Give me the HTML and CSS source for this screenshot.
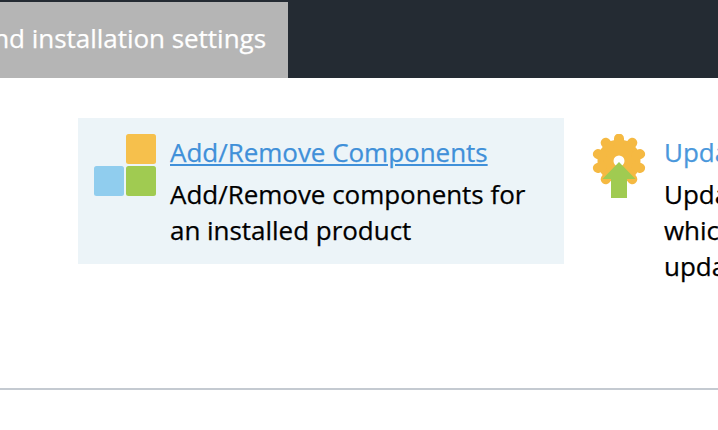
FILE: index.html
```
<!DOCTYPE html>
<html lang="en">
<head>
<meta charset="utf-8">
<title>Installation settings</title>
<link rel="stylesheet" href="styles.css">
</head>
<body>
<header class="topbar"><div class="tab">nd installation settings</div></header>
<main class="cards">
  <section class="card active">
    <svg class="icon" width="64" height="64" viewBox="0 0 64 64">
      <rect x="32" width="30" height="30" rx="2.5" fill="#f6c04c"/>
      <rect y="32" width="30" height="30" rx="2.5" fill="#90cdee"/>
      <rect x="32" y="32" width="30" height="30" rx="2.5" fill="#a0cb51"/>
    </svg>
    <div class="text">
      <a class="title" href="#">Add/Remove Components</a>
      <p class="desc">Add/Remove components for<br>an installed product</p>
    </div>
  </section>
  <section class="card">
    <svg class="icon" width="64" height="64" viewBox="0 0 64 64">
      <g stroke="#f5b942" fill="none">
        <circle cx="31" cy="27" r="13.5" stroke-width="16"/>
        <path stroke-width="10" stroke-linejoin="round" stroke-linecap="round" d="M31 9V4.5M41.6 12.4L44.3 8.7M48.1 21.4L52.1 20.1M48.1 32.6L52.1 33.9M41.6 41.6L44.3 45.3M20.4 41.6L17.7 45.3M13.9 32.6L9.9 33.9M13.9 21.4L9.9 20.1M20.4 12.4L17.7 8.7"/>
      </g>
      <path fill="#a0cb51" d="M31 28L47.5 45H39V64H23V45H14.5Z"/>
    </svg>
    <div class="text">
      <a class="title" href="#">Update Components</a>
      <p class="desc">Update components<br>which have available<br>updates</p>
    </div>
  </section>
</main>
<hr class="rule">
</body>
</html>
```
FILE: styles.css
```
* { box-sizing: border-box; }
body {
  margin: 0;
  height: 430px;
  overflow: hidden;
  background: #fff;
  color: #000;
  font: 26px/36px "Open Sans", sans-serif;
  letter-spacing: -0.03px;
  -webkit-text-stroke: 0.25px;
}
.topbar {
  display: flex;
  height: 78px;
  padding-top: 2px;
  background: #242b33;
}
.tab {
  display: flex;
  justify-content: flex-end;
  width: 288px;
  padding: 18px 22px 0 0;
  background: #b5b5b5;
  color: #fff;
  white-space: nowrap;
}
.cards {
  display: flex;
  height: 270px;
  margin-top: 40px;
  padding-left: 78px;
  align-items: flex-start;
  overflow: hidden;
}
.card {
  display: flex;
  flex: none;
  gap: 12px;
  width: 486px;
  height: 146px;
  padding: 16px 0 0 16px;
  white-space: nowrap;
}
.card + .card { margin-left: 8px; }
.active { background: #ecf4f8; }
.icon { flex: none; }
.title {
  display: block;
  color: #4a98dc;
  text-decoration: none;
}
.active .title {
  color: #4090d9;
  text-decoration: underline;
}
.desc { margin: 6px 0 0; }
.rule {
  height: 2px;
  margin: 0;
  border: 0;
  background: #c4cad1;
}
```
